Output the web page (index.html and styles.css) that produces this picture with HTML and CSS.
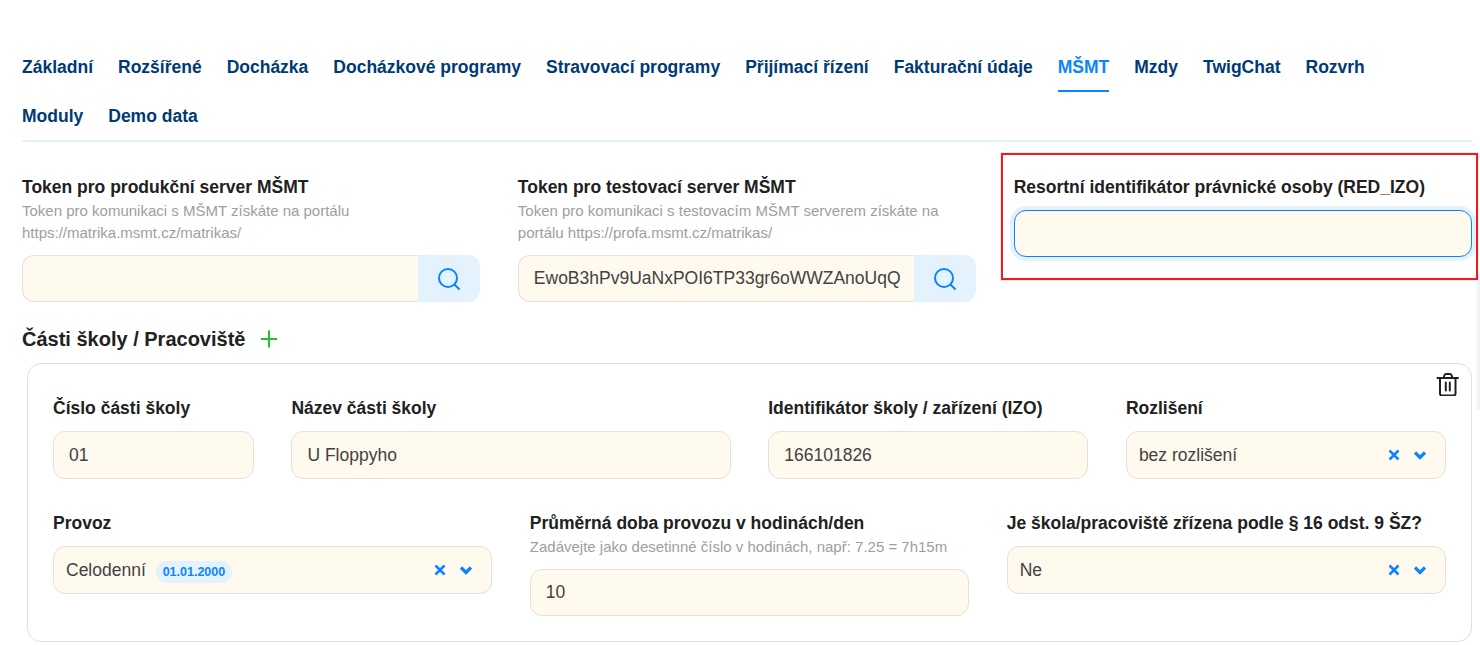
FILE: index.html
```html
<!DOCTYPE html>
<html lang="cs">
<head>
<meta charset="utf-8">
<title>MŠMT</title>
<link rel="stylesheet" href="styles.css">
</head>
<body>
<main class="page">
  <nav class="tabs">
    <a class="tab">Základní</a>
    <a class="tab">Rozšířené</a>
    <a class="tab">Docházka</a>
    <a class="tab">Docházkové programy</a>
    <a class="tab">Stravovací programy</a>
    <a class="tab">Přijímací řízení</a>
    <a class="tab">Fakturační údaje</a>
    <a class="tab active">MŠMT</a>
    <a class="tab">Mzdy</a>
    <a class="tab">TwigChat</a>
    <a class="tab">Rozvrh</a>
    <a class="tab">Moduly</a>
    <a class="tab">Demo data</a>
  </nav>

  <section class="grid top">
    <div class="field span4">
      <label class="label">Token pro produkční server MŠMT</label>
      <p class="help">Token pro komunikaci s MŠMT získáte na portálu https://matrika.msmt.cz/matrikas/</p>
      <div class="group">
        <div class="control joined"></div>
        <button class="search"><svg viewBox="0 0 24 24" width="24" height="24"><circle cx="11" cy="11" r="9" /><path d="M17.5 17.5 22 22"/></svg></button>
      </div>
    </div>
    <div class="field span4">
      <label class="label">Token pro testovací server MŠMT</label>
      <p class="help">Token pro komunikaci s testovacím MŠMT serverem získáte na portálu https://profa.msmt.cz/matrikas/</p>
      <div class="group">
        <div class="control joined">EwoB3hPv9UaNxPOI6TP33gr6oWWZAnoUqQ</div>
        <button class="search"><svg viewBox="0 0 24 24" width="24" height="24"><circle cx="11" cy="11" r="9" /><path d="M17.5 17.5 22 22"/></svg></button>
      </div>
    </div>
    <div class="field span4 highlighted">
      <label class="label">Resortní identifikátor právnické osoby (RED_IZO)</label>
      <div class="control focused"></div>
      <div class="redbox"></div>
    </div>
  </section>

  <h2 class="section-title">Části školy / Pracoviště
    <svg class="plus" viewBox="0 0 18 18" width="18" height="18"><path d="M9 0.500V17.500M1 9H17"/></svg>
  </h2>

  <section class="card">
    <svg class="trash" viewBox="0 0 24 24" width="24" height="24"><path d="M1.500 6H22M7.500 6 8.500 3A1.500 1.500 0 0 1 10 2H14A1.500 1.500 0 0 1 15.500 3L16.500 6M4 6V21.500A2 2 0 0 0 6 23.500H17.500A2 2 0 0 0 19.500 21.500V6M9.800 10.500V18.500M13.800 10.500V18.500"/></svg>
    <div class="grid row-one">
      <div class="field span2">
        <label class="label">Číslo části školy</label>
        <div class="control">01</div>
      </div>
      <div class="field span4">
        <label class="label">Název části školy</label>
        <div class="control">U Floppyho</div>
      </div>
      <div class="field span3">
        <label class="label">Identifikátor školy / zařízení (IZO)</label>
        <div class="control">166101826</div>
      </div>
      <div class="field span3">
        <label class="label">Rozlišení</label>
        <div class="control select"><span class="value">bez rozlišení</span>
          <svg class="x" viewBox="0 0 12 12" width="12" height="12"><path d="M1.500 1.500 10.500 10.500M10.500 1.500 1.500 10.500"/></svg>
          <svg class="chev" viewBox="0 0 14 10" width="14" height="10"><path d="M2 2.500 7 7.500 12 2.500"/></svg>
        </div>
      </div>
    </div>
    <div class="grid row-two">
      <div class="field span4">
        <label class="label">Provoz</label>
        <div class="control select"><span class="value">Celodenní <span class="badge">01.01.2000</span></span>
          <svg class="x" viewBox="0 0 12 12" width="12" height="12"><path d="M1.500 1.500 10.500 10.500M10.500 1.500 1.500 10.500"/></svg>
          <svg class="chev" viewBox="0 0 14 10" width="14" height="10"><path d="M2 2.500 7 7.500 12 2.500"/></svg>
        </div>
      </div>
      <div class="field span4">
        <label class="label">Průměrná doba provozu v hodinách/den</label>
        <p class="help">Zadávejte jako desetinné číslo v hodinách, např: 7.25 = 7h15m</p>
        <div class="control">10</div>
      </div>
      <div class="field span4">
        <label class="label">Je škola/pracoviště zřízena podle § 16 odst. 9 ŠZ?</label>
        <div class="control select"><span class="value">Ne</span>
          <svg class="x" viewBox="0 0 12 12" width="12" height="12"><path d="M1.500 1.500 10.500 10.500M10.500 1.500 1.500 10.500"/></svg>
          <svg class="chev" viewBox="0 0 14 10" width="14" height="10"><path d="M2 2.500 7 7.500 12 2.500"/></svg>
        </div>
      </div>
    </div>
  </section>
</main>
<div class="edge-shadow"></div>
</body>
</html>
```
FILE: styles.css
```css
* { box-sizing: border-box; }
html, body { margin: 0; height: 645px; overflow: hidden; background: #fff; }
body { font-family: "Liberation Sans", Arial, sans-serif; color: #212121; }
.page { padding: 43px 8px 0 22px; }

.tabs { display: flex; flex-wrap: wrap; column-gap: 25px; row-gap: 1px; padding-right: 30px; border-bottom: 2px solid #e3f2fd; }
.tab { display: block; height: 48px; padding-top: 14px; font-size: 17.500px; line-height: 20px; font-weight: 700; color: #003a75; position: relative; }
.tab.active { color: #0a84ff; }
.tab.active::after { content: ""; position: absolute; left: 0; right: 0; bottom: -1px; height: 2px; background: #0a84ff; }

.grid { display: grid; grid-template-columns: repeat(12, minmax(0, 1fr)); column-gap: 37.500px; }
.span2 { grid-column: span 2; }
.span3 { grid-column: span 3; }
.span4 { grid-column: span 4; }
.field { display: flex; flex-direction: column; min-width: 0; position: relative; }

.top { margin-top: 36px; }
.label { font-size: 17.500px; line-height: 20px; font-weight: 700; color: #212121; margin-top: -1px; margin-bottom: 13px; }
.help { margin: -10px 0 11px; font-size: 15px; line-height: 22px; color: #9e9e9e; }

.control { height: 47px; border: 1px solid #e4e0da; border-radius: 12px; background: #fff9ee; font-size: 17.500px; line-height: 45px; color: #424242; padding: 0 15px; white-space: nowrap; overflow: hidden; }
.row-one .control, .control.select { height: 48px; line-height: 46px; }
.group { display: flex; }
.control.joined { flex: 1; min-width: 0; border-right: 0; border-radius: 12px 0 0 12px; }
.search { width: 62px; height: 47px; flex: none; border: 0; border-radius: 0 12px 12px 0; background: #e3f2fd; display: flex; align-items: center; justify-content: center; padding: 0; }
.search svg { fill: none; stroke: #0a84ff; stroke-width: 2; stroke-linecap: round; }

.control.focused { border-color: #0a84ff; box-shadow: 0 0 0 4px #e3f2fd; }
.redbox { position: absolute; left: -13px; top: -25px; right: -6px; height: 127px; border: 2px solid #ed1c24; box-shadow: 0 0 1px rgba(237, 28, 36, 0.6); pointer-events: none; }

.section-title { display: flex; align-items: center; gap: 15px; margin: 25px 0 0; font-size: 20px; line-height: 24px; font-weight: 700; color: #212121; }
.plus { fill: none; stroke: #22c02e; stroke-width: 2; }

.card { position: relative; margin: 12px 0 0 5px; padding: 35px 25px 0; height: 279px; border: 1px solid #e0e0e0; border-radius: 14px; }
.trash { position: absolute; right: 11px; top: 8px; fill: none; stroke: #212121; stroke-width: 2; stroke-linecap: round; stroke-linejoin: round; }
.row-two { margin-top: 35px; }

.select { display: flex; align-items: center; padding: 0 18px 0 12px; }
.value { flex: 1; }
.x { fill: none; stroke: #0a84ff; stroke-width: 2.500; margin-right: 13px; }
.chev { fill: none; stroke: #0a84ff; stroke-width: 3.200; }
.badge { display: inline-block; margin-left: 5px; padding: 0 7px; height: 22px; line-height: 22px; border-radius: 11px; background: #e3f2fd; color: #0a84ff; font-size: 12.500px; font-weight: 700; }

.edge-shadow { position: absolute; right: 0; top: 280px; width: 5px; height: 130px; background: linear-gradient(to right, rgba(238, 238, 238, 0), #eeeeee); pointer-events: none; }
```
